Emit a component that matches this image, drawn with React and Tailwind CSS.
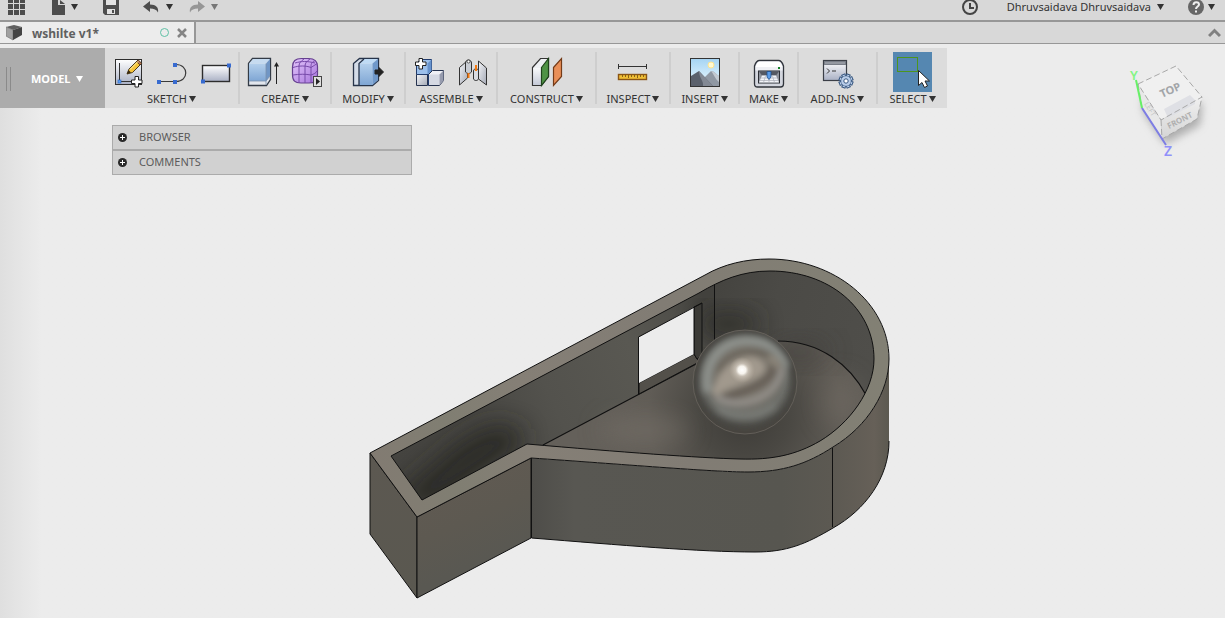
import React from 'react';

const Caret = ({ className = 'text-[#333333]' }) => (
  <svg width="7" height="6" viewBox="0 0 7 6" className={`shrink-0 ${className}`} aria-hidden="true">
    <path d="M0 0h7L3.5 6z" fill="currentColor" />
  </svg>
);

const Defs = () => (
  <svg width="0" height="0" className="absolute" aria-hidden="true">
    <defs>
      <linearGradient id="sheet" x1="0" y1="0" x2="0" y2="1">
        <stop offset="0" stopColor="#ffffff" />
        <stop offset="1" stopColor="#a9b0c4" />
      </linearGradient>
      <linearGradient id="blueFace" x1="0" y1="0" x2="0" y2="1">
        <stop offset="0" stopColor="#b4d0ec" />
        <stop offset="1" stopColor="#7fa6d4" />
      </linearGradient>
      <linearGradient id="metal" x1="0" y1="0" x2="1" y2="1">
        <stop offset="0" stopColor="#f4f5f8" />
        <stop offset="1" stopColor="#a4a9b5" />
      </linearGradient>
      <linearGradient id="purple" x1="0" y1="0" x2="1" y2="1">
        <stop offset="0" stopColor="#e3c6fb" />
        <stop offset="1" stopColor="#a775dc" />
      </linearGradient>
      <linearGradient id="sky" x1="0" y1="0" x2="0" y2="1">
        <stop offset="0" stopColor="#a5d4f3" />
        <stop offset="1" stopColor="#eefaff" />
      </linearGradient>
    </defs>
  </svg>
);

const Plus = ({ x, y }) => (
  <path
    transform={`translate(${x} ${y})`}
    d="M4 0.5h3.5V4H11v3.5H7.500V11H4V7.500H0.500V4H4z"
    fill="#ffffff"
    stroke="#222222"
    strokeWidth="1"
  />
);

const Icon = ({ w = 32, children }) => (
  <svg width={w} height="36" viewBox={`0 0 ${w} 36`} fill="none" aria-hidden="true" className="shrink-0">
    {children}
  </svg>
);

const SketchIcon = () => (
  <Icon>
    <rect x="3.500" y="5.500" width="26" height="25" fill="url(#sheet)" stroke="#2d2d2d" />
    <path d="M7.500 9v18.500H22" stroke="#333333" />
    <rect x="6" y="26" width="3" height="3" fill="#5f9df0" stroke="#2568c8" strokeWidth=".6" />
    <path d="M15 20l2-5 9-9 3.500 3.500-9 9z" fill="#f5c33b" stroke="#3a2a10" strokeWidth=".9" />
    <path d="M24.500 7.500l1.700-1.700 3.500 3.500-1.700 1.700z" fill="#b9775a" stroke="#3a2a10" strokeWidth=".7" />
    <path d="M15 20l1.500-4 2.500 2.500z" fill="#3a2a10" />
    <path d="M18 15.500l8-8" stroke="#fff1a8" />
    <Plus x={19} y={22} />
  </Icon>
);

const LineIcon = () => (
  <Icon>
    <path d="M3 27.500h17c13 0 13-17 0-17" stroke="#3a3a3a" strokeWidth="1.200" />
    <path d="M1 26h4v4h-4zM17 26h4v4h-4zM17 9h4v4h-4z" fill="#386bd0" />
  </Icon>
);

const RectIcon = () => (
  <Icon>
    <rect x="2.500" y="11.500" width="27" height="16" fill="url(#sheet)" stroke="#2d2d2d" strokeWidth="1.400" />
    <path d="M1 25.500h4v4H1zM27 9.500h4v4h-4z" fill="#386bd0" />
  </Icon>
);

const BoxIcon = () => (
  <Icon>
    <path d="M1.500 9.500l4-5h18v21l-4 6h-18z" fill="#e2e6ed" stroke="#333b46" strokeWidth="1.300" />
    <path d="M2 9.500h17V27H2z" fill="url(#blueFace)" />
    <path d="M2 9.500l4-4.500h17l-4 4.500z" fill="#c6dbf0" />
    <path d="M19 9.500L23 5v17l-4 5z" fill="#7096c5" />
    <path d="M19 9.500V31M2 27h17l4-5" stroke="#7890ac" strokeWidth=".8" />
    <path d="M29.500 30V10" stroke="#222222" />
    <path d="M27 12.500L29.500 8l2.500 4.500z" fill="#222222" />
  </Icon>
);

const FormIcon = () => (
  <Icon>
    <path d="M1.500 13c0-6 3-8.500 9-8.500h7c6 0 9 2 9 8v8c0 6-3 8.500-8.500 8.500h-8c-6 0-8.500-2-8.500-8.500z" fill="url(#purple)" stroke="#65408f" strokeWidth="1.200" />
    <path d="M2 13.500c6-2 13-2 18 0 3-2 5-3 6-4M2 21c6-1 13-1 18 0 3-1 5-2 6-4M8 12v17M14 12v17M20 13.500V28M8 12c0-3 2-5 5-7M14 12c0-3 2-5 5-7M20 13.500c0-3 0-5 4-7M4 9c7-2 12-2 20 0" stroke="#774aa9" />
    <rect x="22.500" y="22.500" width="8" height="10" fill="#e0e0e0" stroke="#444444" />
    <path d="M25 24l4 3.500-4 3.500z" fill="#222222" />
  </Icon>
);

const ModifyIcon = () => (
  <Icon>
    <path d="M1.500 9.500l6-5h19v22l-6 5h-19z" fill="#d4dce8" stroke="#27344a" strokeWidth="1.300" />
    <path d="M7 9.500h13.500V31H7z" fill="url(#blueFace)" />
    <path d="M7 9.500l5-4.500h14l-5.500 4.500z" fill="#bfdbf5" />
    <path d="M20.500 9.500L26 5v21l-5.500 5z" fill="#6f98ca" />
    <path d="M7 31V9.500L12 5" stroke="#27344a" strokeWidth="1.300" />
    <path d="M23 16h4v-2.500l4.500 4.500-4.500 4.500V20h-4z" fill="#222222" stroke="#222222" />
  </Icon>
);

const ComponentIcon = () => (
  <Icon>
    <path d="M3.500 9.500l4-4h11v15H3.500z" fill="#9cc0ec" stroke="#213b6c" />
    <path d="M14.500 9.500l4-4v12l-4 3z" fill="#6793cd" />
    <path d="M3.500 20.500h11v11h-11z" fill="url(#metal)" stroke="#26334f" />
    <path d="M15.500 20.500l4-4h11v10l-4 5h-11z" fill="#eff0f5" stroke="#26334f" />
    <path d="M16 20.500h10.500V31H16z" fill="#d5d9e3" />
    <path d="M26.500 20.500l4-4v10l-4 5z" fill="#979cae" />
    <path d="M4 20.500h11.500v11" stroke="#213b6c" />
    <Plus x={2} y={4} />
  </Icon>
);

const JointIcon = () => (
  <Icon>
    <path d="M2.500 13.500l8-7V24l-8 7z" fill="url(#metal)" stroke="#333333" />
    <path d="M8.500 9c0-4 6-4 6 0v9c-2 2-4 2-6 0z" fill="#c9cdd4" stroke="#333333" />
    <circle cx="11.500" cy="7.500" r="1.500" fill="#ffffff" stroke="#333333" strokeWidth=".8" />
    <path d="M21.500 7l8 7V31l-8-6z" fill="url(#metal)" stroke="#333333" />
    <path d="M16.500 17c0-3 5-3 5 0v8c-1 2-4 2-5 0z" fill="#d9dce2" stroke="#333333" />
    <path d="M11.500 19v5M19 11v6" stroke="#f57910" strokeWidth="2" />
  </Icon>
);

const PlaneIcon = () => (
  <Icon>
    <path d="M1.500 13.500l8-9h8v18l-7 9h-9z" fill="#eef0f3" stroke="#333333" strokeWidth="1.200" />
    <path d="M2 14h8.500v17H2z" fill="url(#sheet)" opacity=".6" />
    <path d="M10.500 13.500l7-9v18l-7 9z" fill="#4f9345" stroke="#1f431b" strokeWidth="1.200" />
    <path d="M22.500 13.500l8-9v18l-8 9z" fill="#e98f58" stroke="#743b18" strokeWidth="1.200" />
  </Icon>
);

const MeasureIcon = () => (
  <Icon>
    <path d="M1.500 10v5M29.500 10v5M1.500 12.500h28" stroke="#333333" />
    <rect x="1.500" y="20.500" width="28" height="5" fill="#f0bf35" stroke="#8a5514" strokeWidth="1.400" />
    <path d="M5.500 21v2M8.500 21v2M11.500 21v3M14.500 21v2M17.500 21v2M20.500 21v3M23.500 21v2M26.500 21v2" stroke="#6f4b10" strokeWidth=".8" />
  </Icon>
);

const ImageIcon = () => (
  <Icon>
    <rect x="1.500" y="4.500" width="29" height="28" fill="url(#sky)" />
    <circle cx="22" cy="11" r="3" fill="#fff9d2" stroke="#ffe48e" />
    <path d="M14 25l8-8c3 0 5 3 8 5v10H14z" fill="#9098a3" />
    <path d="M22 17c3 0 5 3 8 5v6c-4-3-4-6-8-11z" fill="#c3cad2" />
    <path d="M2 22l8-5 14 15H2z" fill="#5b616c" />
    <path d="M10 17l14 15H14c1-5-4-8-4-15z" fill="#838994" />
    <rect x="1.500" y="4.500" width="29" height="28" stroke="#333333" />
  </Icon>
);

const PrinterIcon = () => (
  <Icon>
    <path d="M1.500 12c1-3 3-5.500 5-5.500h19c2 0 4 2.500 5 5.500v18c0 2-1 3-3 3h-23c-2 0-3-1-3-3z" fill="#d3d6de" stroke="#30343b" strokeWidth="1.300" />
    <path d="M2.500 13c1-3 2-5.500 4-5.500h19c2 0 3 2.500 4 5.500z" fill="#ffffff" />
    <path d="M2.500 13h27v3.500h-27z" fill="#eff0f4" />
    <rect x="5.500" y="17" width="21" height="12" fill="#8f939c" stroke="#2b2e34" />
    <path d="M6 17.500h20l-3 4H9z" fill="#555962" />
    <path d="M9 21.500h14l3 7H6z" fill="#f3f5f9" />
    <path d="M8 24h16M7 26.500h18M12.500 22l-2 6.500M16 22v6.500M19.500 22l2 6.500" stroke="#a9aeb8" strokeWidth=".7" />
    <path d="M14 17.500h4V23l-2 2.500-2-2.500z" fill="#5b9be6" stroke="#1d4f8d" strokeWidth=".8" />
    <path d="M25 13h2v2h-2z" fill="#148027" />
  </Icon>
);

const ScriptIcon = () => (
  <Icon>
    <rect x="1.500" y="6.500" width="23" height="20" fill="url(#sheet)" stroke="#3b3f47" strokeWidth="1.200" />
    <path d="M2 7h22v4H2z" fill="#787d87" />
    <path d="M3 9h20" stroke="#bfc3ca" strokeWidth=".8" />
    <path d="M5 14.500l2.500 2.500L5 19.500M10 17h4" stroke="#333333" />
    <g transform="translate(24 27)">
      {[22, 67, 112, 157].map((angle) => (
        <path key={angle} d="M-1.700-7h3.400V7h-3.400z" transform={`rotate(${angle})`} fill="#c3d5ee" stroke="#35557f" />
      ))}
      <circle r="5.200" fill="#b9cde9" stroke="#35557f" strokeWidth=".6" />
      <circle r="2.200" fill="#ffffff" stroke="#35557f" />
    </g>
  </Icon>
);

const SelectIcon = () => (
  <svg width="39" height="40" viewBox="0 0 39 40" fill="none" aria-hidden="true">
    <rect x="4.500" y="5.500" width="20" height="14" stroke="#4d951d" />
    <path d="M25.500 18.500v15l3.500-3 2.500 5 3-1.500-2.500-5h4.500z" fill="#ffffff" stroke="#222222" />
  </svg>
);

const groups = [
  { label: 'SKETCH', width: 'w-[133px]', gap: 'gap-3', icons: [SketchIcon, LineIcon, RectIcon] },
  { label: 'CREATE', width: 'w-[92px]', gap: 'gap-3', icons: [BoxIcon, FormIcon] },
  { label: 'MODIFY', width: 'w-[74px]', icons: [ModifyIcon] },
  { label: 'ASSEMBLE', width: 'w-[92px]', gap: 'gap-3', icons: [ComponentIcon, JointIcon] },
  { label: 'CONSTRUCT', width: 'w-[99px]', icons: [PlaneIcon] },
  { label: 'INSPECT', width: 'w-[74px]', icons: [MeasureIcon] },
  { label: 'INSERT', width: 'w-[69px]', icons: [ImageIcon] },
  { label: 'MAKE', width: 'w-[59px]', icons: [PrinterIcon] },
  { label: 'ADD-INS', width: 'w-[79px]', icons: [ScriptIcon] },
  { label: 'SELECT', width: 'w-[71px]', icons: [SelectIcon], active: true },
];

const ToolGroup = ({ group, first }) => (
  <div className={`flex shrink-0 flex-col items-center ${group.width} ${first ? '' : 'border-l-2 border-[#cecece]'}`}>
    <div className={`flex h-10 shrink-0 items-center justify-center ${group.gap || ''}`}>
      {group.icons.map((Glyph, i) => (
        <button key={i} type="button" aria-label={group.label} className={group.active ? 'bg-[#5587b1]' : ''}>
          <Glyph />
        </button>
      ))}
    </div>
    <button type="button" className="flex items-center gap-0.5 text-[11px] leading-[14px] whitespace-nowrap text-[#333333]">
      {group.label}
      <Caret />
    </button>
  </div>
);

const TopBar = () => (
  <header className="flex h-[22px] items-start justify-between overflow-hidden border-b-2 border-[#979797] bg-[#d8d8d8] pr-2.5 pl-2">
    <div className="flex items-start text-[#4d4d4d]">
      <button type="button" aria-label="Data panel">
        <svg width="18" height="16" viewBox="0 0 18 16" fill="currentColor">
          <path d="M0 0h5v3H0zM6 0h5v3H6zM12 0h5v3h-5zM0 4h5v5H0zM6 4h5v5H6zM12 4h5v5h-5zM0 10h5v5H0zM6 10h5v5H6zM12 10h5v5h-5z" />
        </svg>
      </button>
      <button type="button" aria-label="File" className="ml-6 flex h-3.5 items-center gap-1.5">
        <svg width="15" height="15" viewBox="0 0 15 15" fill="currentColor">
          <path d="M2 0h6v5h7v10H2z" />
          <path d="M10 0l5 4h-5z" />
        </svg>
        <Caret />
      </button>
      <button type="button" aria-label="Save" className="ml-6">
        <svg width="18" height="16" viewBox="0 0 18 16">
          <path d="M1 0h16v15H3l-2-2z" fill="#4d4d4d" />
          <path d="M4 0h10v5H4zM5 9h8v5H5z" fill="#e2e2e2" />
          <path d="M10 10h2v3h-2z" fill="#4d4d4d" />
        </svg>
      </button>
      <button type="button" aria-label="Undo" className="ml-[23px] flex h-3.5 items-center gap-1.5">
        <svg width="17" height="14" viewBox="0 0 17 14" fill="currentColor">
          <path d="M0 6.500L7 1v3.500c6 0 9 3 8 8-1.500-3-4-4-8-4V12z" />
        </svg>
        <Caret />
      </button>
      <button type="button" aria-label="Redo" className="ml-[15px] flex h-3.5 items-center gap-1.5 text-[#969696]">
        <svg width="17" height="14" viewBox="0 0 17 14" fill="currentColor">
          <path d="M17 6.500L10 1v3.500c-6 0-9 3-8 8 1.500-3 4-4 8-4V12z" />
        </svg>
        <Caret className="text-[#777777]" />
      </button>
    </div>
    <div className="flex h-4 items-start">
      <button type="button" aria-label="Job status" className="mr-7">
        <svg width="18" height="16" viewBox="0 0 18 16" fill="none" stroke="#444444" strokeWidth="2">
          <circle cx="9" cy="7" r="7" />
          <path d="M9 3v5h4" />
        </svg>
      </button>
      <button type="button" className="mr-6 flex h-3.5 items-center gap-1.5 text-[11px] leading-3 text-[#333333]">
        Dhruvsaidava Dhruvsaidava
        <Caret />
      </button>
      <button type="button" aria-label="Help" className="flex h-4 items-start gap-1">
        <svg width="16" height="16" viewBox="0 0 16 16" fill="none">
          <circle cx="8" cy="7" r="8" fill="#666666" />
          <path d="M5.500 5c0-4 5.500-3.500 5.500-.5C11 6.500 8 6.500 8 9" stroke="#eeeeee" strokeWidth="2" />
          <path d="M7 10.500h2v2H7z" fill="#eeeeee" />
        </svg>
        <span className="flex h-3.5 items-center"><Caret /></span>
      </button>
    </div>
  </header>
);

const TabBar = () => (
  <nav className="flex h-[22px] items-stretch justify-between border-b border-[#979797] bg-[#d8d8d8]">
    <div className="flex w-[196px] items-center border-r-2 border-[#979797] bg-[#ececec] pr-[7px] pl-1.5">
      <svg width="16" height="18" viewBox="0 0 16 18" aria-hidden="true">
        <path d="M0 3l8-2 8 2-9 3z" fill="#5f5f5f" />
        <path d="M0 3l7 3v10l-7-4z" fill="#a0a0a0" stroke="#777777" strokeWidth=".7" />
        <path d="M7 6l9-3v8l-9 5z" fill="#444444" />
      </svg>
      <a href="#design" className="ml-2.5 pt-0.5 text-[12px] leading-4 font-bold text-[#606060]">wshilte v1*</a>
      <span className="ml-auto size-[9px] rounded-full border border-[#5fc0a5]" />
      <button type="button" aria-label="Close tab" className="ml-2">
        <svg width="10" height="10" viewBox="0 0 10 10" stroke="#858585" strokeWidth="2.500">
          <path d="M1 1l8 8M9 1L1 9" />
        </svg>
      </button>
    </div>
    <button type="button" aria-label="Collapse" className="mr-1">
      <svg width="13" height="10" viewBox="0 0 13 10" fill="none" stroke="#808080" strokeWidth="3">
        <path d="M1 8l5.500-5.500L12 8" />
      </svg>
    </button>
  </nav>
);

const Toolbar = () => (
  <div className="mt-1 flex h-[60px] w-fit bg-[#dcdcdc]">
    <button type="button" className="flex w-[105px] shrink-0 items-center gap-1.5 bg-[#acacac] pt-0.5 pl-1.5 text-[11px] font-bold text-white">
      <span className="mr-3.5 h-6 w-[5px] border-x border-[#8a8a8a]" />
      MODEL
      <Caret className="text-white" />
    </button>
    <div className="flex py-1">
      {groups.map((group, i) => (
        <ToolGroup key={group.label} group={group} first={i === 0} />
      ))}
    </div>
  </div>
);

const PanelHeader = ({ label }) => (
  <button type="button" className="flex h-[25px] w-full items-center gap-3 border border-[#ababab] bg-[#d1d1d1] px-[5px] text-[11px] text-[#5c5c5c]">
    <svg width="9" height="9" viewBox="0 0 9 9" aria-hidden="true">
      <circle cx="4.500" cy="4.500" r="4.500" fill="#292929" />
      <path d="M4.500 2v5M2 4.500h5" stroke="#ffffff" />
    </svg>
    {label}
  </button>
);

const ViewCube = () => (
  <svg width="90" height="106" viewBox="1125 60 90 106" fill="none" className="shrink-0" role="img" aria-label="View cube">
    <defs>
      <filter id="cubeShadow" x="-30%" y="-30%" width="160%" height="160%">
        <feGaussianBlur stdDeviation="4" />
      </filter>
      <linearGradient id="cubeFront" x1="0" y1="0" x2="0" y2="1">
        <stop offset="0" stopColor="#f0f0f0" />
        <stop offset="1" stopColor="#d5d5d5" />
      </linearGradient>
    </defs>
    <path d="M1142 98l2 15 21 31 35-19 2-22z" fill="#a6a6a6" opacity=".9" filter="url(#cubeShadow)" />
    <path d="M1138 84l38-18 26 31-41 23z" fill="#f0f0f0" />
    <path d="M1138 84l23 36 1 19-20-31z" fill="#e8e8e8" />
    <path d="M1161 120l41-23-5 22-35 20z" fill="url(#cubeFront)" />
    <path d="M1164 109l26-14 5 5v4l-27 14z" fill="#dfe0e5" />
    <path d="M1138 84l38-18 26 31-41 23zM1161 120l1 19 35-20 5-22M1138 84l4 24 20 31" stroke="#a8a8a8" strokeDasharray="6 3" />
    <text x="1162" y="98" transform="rotate(-24 1162 98)" fontSize="11" fontWeight="700" fill="#a2a5a8">TOP</text>
    <text x="1169" y="129" transform="rotate(-27 1169 129)" fontSize="8" fontWeight="700" fill="#b0b0b0">FRONT</text>
    <text x="1144" y="104" transform="rotate(58 1144 104)" fontSize="7" fill="#c4c4c4">LEFT</text>
    <path d="M1136 80l6 28" stroke="#66f066" strokeWidth="2" />
    <path d="M1142 108l24 37" stroke="#7d7de4" strokeWidth="2" />
    <text x="1130" y="80" fontSize="13" fontWeight="600" fill="#83f583">Y</text>
    <text x="1164" y="156" fontSize="14" fontWeight="600" fill="#9090fa">Z</text>
  </svg>
);

const OUTER = 'M370 453L705 275C724 264 746 259 769 259C834 259 889 303 889 359C889 391 868 426 833 447C807 464 783 472 748 472C713 472 620 464 531 458L417 517Z';
const INNER = 'M391 456L699 293C721 280 742 271 770 271C829 271 874 308 874 359C874 390 850 423 820 441C796 455 772 460 740 459C700 458 620 452 527 444L422 500Z';

const Whistle = () => (
  <svg viewBox="0 108 1225 510" className="absolute inset-0 h-full w-full" fill="none" role="img" aria-label="Whistle body">
    <defs>
      <linearGradient id="rim" gradientUnits="userSpaceOnUse" x1="370" y1="453" x2="889" y2="360">
        <stop offset="0" stopColor="#827b72" />
        <stop offset=".15" stopColor="#807e72" />
        <stop offset=".3" stopColor="#857f76" />
        <stop offset=".6" stopColor="#817c74" />
        <stop offset="1" stopColor="#828074" />
      </linearGradient>
      <linearGradient id="sideLeft" x1="0" y1="0" x2="0" y2="1">
        <stop offset="0" stopColor="#5c5851" />
        <stop offset="1" stopColor="#5a5850" />
      </linearGradient>
      <linearGradient id="sideMouth" gradientUnits="userSpaceOnUse" x1="450" y1="480" x2="485" y2="560">
        <stop offset="0" stopColor="#605a52" />
        <stop offset=".5" stopColor="#5d5951" />
        <stop offset="1" stopColor="#595852" />
      </linearGradient>
      <linearGradient id="sideFront" gradientUnits="userSpaceOnUse" x1="531" y1="0" x2="889" y2="0">
        <stop offset="0" stopColor="#4e4d49" />
        <stop offset=".12" stopColor="#585752" />
        <stop offset=".7" stopColor="#575650" />
        <stop offset=".84" stopColor="#5c5952" />
        <stop offset=".96" stopColor="#666058" />
        <stop offset="1" stopColor="#5c5950" />
      </linearGradient>
      <linearGradient id="wall" gradientUnits="userSpaceOnUse" x1="400" y1="470" x2="714" y2="320">
        <stop offset="0" stopColor="#454440" />
        <stop offset=".25" stopColor="#474642" />
        <stop offset=".48" stopColor="#53524d" />
        <stop offset=".75" stopColor="#595852" />
        <stop offset=".9" stopColor="#504f4a" />
        <stop offset="1" stopColor="#42413d" />
      </linearGradient>
      <linearGradient id="backWall" gradientUnits="userSpaceOnUse" x1="714" y1="300" x2="874" y2="350">
        <stop offset="0" stopColor="#454440" />
        <stop offset=".35" stopColor="#4b4a46" />
        <stop offset="1" stopColor="#4f4e4a" />
      </linearGradient>
      <radialGradient id="floor" gradientUnits="userSpaceOnUse" cx="745" cy="415" r="150">
        <stop offset="0" stopColor="#3d3b37" />
        <stop offset=".3" stopColor="#4a4843" />
        <stop offset=".65" stopColor="#605c56" />
        <stop offset="1" stopColor="#64605a" />
      </radialGradient>
      <radialGradient id="ball" cx=".5" cy=".44" r=".58">
        <stop offset="0" stopColor="#8f897f" />
        <stop offset=".45" stopColor="#78736a" />
        <stop offset=".68" stopColor="#6c6d68" />
        <stop offset=".84" stopColor="#50504c" />
        <stop offset="1" stopColor="#42413d" />
      </radialGradient>
      <radialGradient id="glint">
        <stop offset="0" stopColor="#ffffff" />
        <stop offset=".3" stopColor="#f7f4ee" />
        <stop offset=".5" stopColor="#cdc5ba" stopOpacity=".8" />
        <stop offset="1" stopColor="#b8aea0" stopOpacity="0" />
      </radialGradient>
      <filter id="soft2" x="-30%" y="-30%" width="160%" height="160%">
        <feGaussianBlur stdDeviation="3" />
      </filter>
      <filter id="soft8" x="-50%" y="-50%" width="200%" height="200%">
        <feGaussianBlur stdDeviation="12" />
      </filter>
      <clipPath id="ballClip">
        <circle cx="745" cy="382" r="52" />
      </clipPath>
      <clipPath id="cavity">
        <path d={INNER} />
      </clipPath>
    </defs>

    {/* outer sides */}
    <path d="M370 453L417 517V598L370 534Z" fill="url(#sideLeft)" stroke="#111111" />
    <path d="M417 517L531 458V538L417 598Z" fill="url(#sideMouth)" stroke="#111111" />
    <path d="M531 458C620 464 713 472 748 472C783 472 807 464 833 447C868 426 889 391 889 359V441C889 478 865 510 833 528C806 544 787 552 755 552C700 552 620 545 531 538Z" fill="url(#sideFront)" />
    <path d="M531.500 458V538C620 545 700 552 755 552C787 552 806 544 833 528C865 510 889 478 889 441" stroke="#111111" />
    <path d="M832.500 448V527" stroke="#111111" />

    {/* rim and cavity */}
    <path d={OUTER} fill="url(#rim)" stroke="#111111" />
    <path d={INNER} fill="url(#wall)" />
    <g clipPath="url(#cavity)">
      <path d="M714 265H890V410L866 395C850 365 820 340 778 341L714 355Z" fill="url(#backWall)" />
      <ellipse cx="729" cy="324" rx="32" ry="13" fill="#2b2a26" opacity=".75" filter="url(#soft8)" />
      <path d="M390 500L460 440L495 422L525 430L520 450L430 510Z" fill="#262521" opacity=".8" filter="url(#soft8)" />
      <path d="M543 445L697 364C720 350 750 341 778 341C820 341 850 365 866 395L880 470H560Z" fill="url(#floor)" />
      <ellipse cx="645" cy="430" rx="45" ry="16" fill="#78726a" opacity=".55" filter="url(#soft8)" />
      <ellipse cx="840" cy="402" rx="20" ry="26" fill="#746e66" opacity=".5" filter="url(#soft8)" />
      <ellipse cx="800" cy="352" rx="30" ry="12" fill="#403e3a" opacity=".6" filter="url(#soft8)" />
      <path d="M543 445L698 363M778 341C820 341 850 365 866 395" stroke="#111111" strokeWidth="1.200" />
      <path d="M714.500 284V360" stroke="#111111" />
    </g>
    <path d={INNER} stroke="#111111" />

    {/* air window */}
    <path d="M639 383L694 354L699 362L639 394Z" fill="#53504a" stroke="#111111" />
    <path d="M694 307L702 303V356L697 359L694 354Z" fill="#3b3a36" stroke="#111111" />
    <path d="M639 337L694 307V354L639 383Z" fill="#ececec" />
    <path d="M638.500 394V337L702 303M694 307V354" stroke="#111111" />

    {/* ball */}
    <circle cx="745" cy="382" r="52" fill="url(#ball)" />
    <g clipPath="url(#ballClip)">
      <g filter="url(#soft2)">
        <path d="M708 392C703 362 720 343 745 341C766 340 780 350 788 366" stroke="#8f938e" strokeWidth="8" />
        <path d="M718 372C730 346 768 346 779 366" stroke="#6a655c" strokeWidth="6" />
        <path d="M712 394C716 372 732 359 748 357C764 356 771 370 759 376C744 384 726 388 717 396Z" fill="#a1998d" />
        <path d="M720 401C742 389 763 391 776 366" stroke="#676158" strokeWidth="9" />
        <path d="M716 397C735 410 778 401 782 368" stroke="#94918c" strokeWidth="6" />
        <path d="M714 402C724 411 760 413 779 396" stroke="#6f706b" strokeWidth="3" />
        <path d="M718 408C732 418 760 417 775 405" stroke="#7b7e79" strokeWidth="4" />
        <path d="M778 368C776 359 771 357 768 360" stroke="#8f877b" strokeWidth="6" />
        <circle cx="745" cy="382" r="51" stroke="#464541" strokeWidth="8" />
        <path d="M700 409C718 440 772 440 790 409" stroke="#464541" strokeWidth="12" />
      </g>
    </g>
    <circle cx="742" cy="370" r="13" fill="url(#glint)" />
    <circle cx="745" cy="382" r="52" stroke="#69655e" strokeWidth=".8" />
  </svg>
);

const App = () => {
  return (
    <div className="flex min-h-screen flex-col bg-[#ececec] font-['Noto_Sans','Open_Sans',sans-serif]">
      <Defs />
      <TopBar />
      <TabBar />
      <Toolbar />
      <main className="relative flex flex-1 items-start justify-between bg-linear-to-r from-[#dfdfdf] to-[#ececec] to-[42px]">
        <Whistle />
        <aside className="relative mt-[17px] ml-28 w-[300px]">
          <PanelHeader label="BROWSER" />
          <PanelHeader label="COMMENTS" />
        </aside>
        <div className="relative -mt-12 mr-2.5">
          <ViewCube />
        </div>
      </main>
    </div>
  );
};

export default App;
